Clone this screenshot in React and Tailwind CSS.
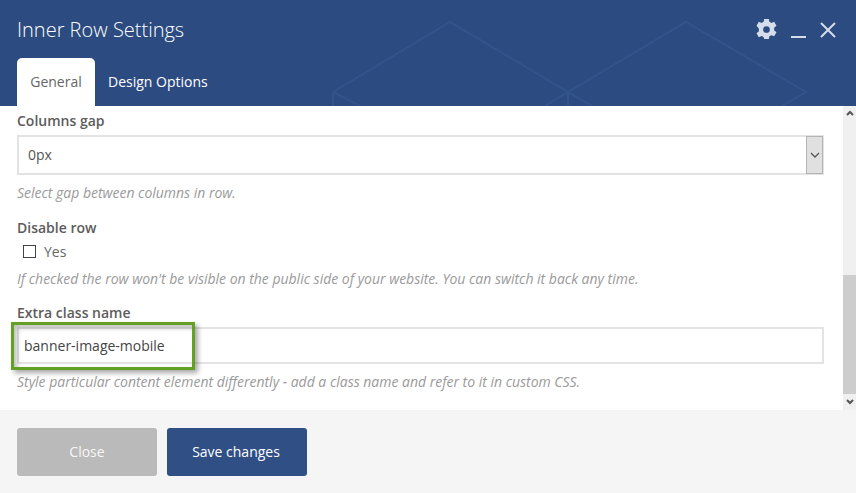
const font = { fontFamily: '"Open Sans", sans-serif' };

function HeaderPattern() {
  return (
    <svg className="absolute inset-0 pointer-events-none" width="856" height="106" viewBox="0 0 856 106" fill="none">
      <path
        d="M333 106V92L450 22L568 92L686 22L806 92L782 106M333 92L360 106M568 92V106M568 92L545 106M568 92L592 106"
        stroke="#33548b"
        strokeWidth="2"
      />
    </svg>
  );
}

function GearIcon() {
  return (
    <svg width="23" height="23" viewBox="0 0 24 24" fill="#d5dcea">
      <path
        fillRule="evenodd"
        d="M9.6 1h4.8l.6 3c.7.3 1.4.6 2 1.1l3-1.1 2.4 4.2-2.5 2.1c.1.8.1 1.6 0 2.4l2.5 2.1-2.4 4.2-3-1.1c-.6.5-1.3.8-2 1.1l-.6 3H9.6L9 20c-.7-.3-1.4-.6-2-1.1l-3 1.1-2.4-4.2 2.5-2.1c-.1-.8-.1-1.6 0-2.4L1.6 8.2 4 4l3 1.1c.6-.5 1.3-.8 2-1.1L9.6 1zM12 8.5a3.5 3.5 0 100 7 3.5 3.5 0 000-7z"
      />
    </svg>
  );
}

function Help({ children }) {
  return <p className="text-[13.97px] leading-[19px] italic text-[#9a9a9a]">{children}</p>;
}

function Label({ children }) {
  return <div className="text-[14px] leading-[19px] font-semibold text-[#5c5c5c]">{children}</div>;
}

export default function App() {
  return (
    <div className="w-[856px] h-[493px] flex flex-col overflow-hidden bg-white" style={font}>
      {/* Header */}
      <div className="relative h-[106px] shrink-0 bg-[#2c4b80] text-white">
        <HeaderPattern />
        <div className="relative flex items-start justify-between pl-[17px] pr-[20px] pt-[16px]">
          <h1 className="text-[20px] leading-[27px] font-light">Inner Row Settings</h1>
          <div className="flex items-center pt-[2px]">
            <GearIcon />
            <div className="w-[15px] h-[2px] ml-[13px] mt-[14px] bg-[#d5dcea]" />
            <svg className="ml-[14px]" width="16" height="16" viewBox="0 0 16 16" fill="none" stroke="#d5dcea" strokeWidth="2">
              <path d="M1 1L15 15M15 1L1 15" />
            </svg>
          </div>
        </div>
        <div className="relative flex mt-[15px] pl-[17px]">
          <div className="w-[78px] h-[48px] pb-[2px] flex items-center justify-center rounded-t-[5px] bg-white text-[14px] text-[#666666]">
            General
          </div>
          <div className="h-[48px] pb-[2px] flex items-center pl-[13px] text-[14px] text-white">Design Options</div>
        </div>
      </div>

      {/* Body */}
      <div className="relative h-[304px] shrink-0 flex">
        <div className="flex-1 pl-[17px] pr-[19px] pt-[5px]">
          <Label>Columns gap</Label>
          <div className="mt-[5px] h-[40px] flex items-center justify-between border-y-2 border-l-2 border-r border-[#e3e3e3] bg-white">
            <span className="pl-[9px] pb-[1px] text-[14px] text-[#555555]">0px</span>
            <div className="w-[17px] h-[38px] shrink-0 flex items-center justify-center bg-[#e0e0e0] border border-[#b4b4b4]">
              <svg width="10" height="6" viewBox="0 0 10 6" fill="none" stroke="#555555" strokeWidth="1.3">
                <path d="M1 1L5 5L9 1" />
              </svg>
            </div>
          </div>
          <div className="mt-[8px]">
            <Help>Select gap between columns in row.</Help>
          </div>

          <div className="mt-[16px]">
            <Label>Disable row</Label>
          </div>
          <div className="mt-[5px] pl-[6px] flex items-center h-[19px]">
            <span className="w-[13px] h-[13px] border border-[#444444] bg-white" />
            <span className="ml-[8px] text-[14px] text-[#666666]">Yes</span>
          </div>
          <div className="mt-[8px]">
            <Help>If checked the row won't be visible on the public side of your website. You can switch it back any time.</Help>
          </div>

          <div className="mt-[15px]">
            <Label>Extra class name</Label>
          </div>
          <div className="mt-[5px] h-[37px] flex items-center border-2 border-[#e3e3e3] bg-white">
            <span className="pl-[5px] text-[14px] text-[#444444]">banner-image-mobile</span>
          </div>
          <div className="mt-[8px]">
            <Help>Style particular content element differently - add a class name and refer to it in custom CSS.</Help>
          </div>
        </div>

        {/* Scrollbar */}
        <div className="w-[13px] shrink-0 flex flex-col bg-[#f0f0f0]">
          <div className="h-[13px] flex items-center justify-center">
            <svg width="8" height="6" viewBox="0 0 8 6" fill="none" stroke="#555555" strokeWidth="2">
              <path d="M1 5L4 2L7 5" />
            </svg>
          </div>
          <div className="mt-[156px] h-[119px] bg-[#cdcdcd]" />
          <div className="h-[16px] flex items-center justify-center">
            <svg width="8" height="6" viewBox="0 0 8 6" fill="none" stroke="#555555" strokeWidth="2">
              <path d="M1 1L4 4L7 1" />
            </svg>
          </div>
        </div>

        {/* Green highlight annotation */}
        <div className="absolute left-[11px] top-[216px] w-[184px] h-[48px] border-[3px] border-[#62a124] shadow-[3px_3px_5px_rgba(0,0,0,0.35),inset_3px_3px_5px_rgba(0,0,0,0.25)]" />
      </div>

      {/* Footer */}
      <div className="flex-1 flex gap-[10px] pl-[17px] pt-[18px] bg-[#f5f5f5]">
        <div className="w-[140px] h-[48px] pb-[2px] flex items-center justify-center rounded-[3px] bg-[#bababa] text-[14px] text-[#f7f7f7]">
          Close
        </div>
        <div className="w-[140px] h-[48px] pb-[2px] pr-[2px] flex items-center justify-center rounded-[3px] bg-[#2f4f85] text-[14px] text-white">
          Save changes
        </div>
      </div>
    </div>
  );
}
